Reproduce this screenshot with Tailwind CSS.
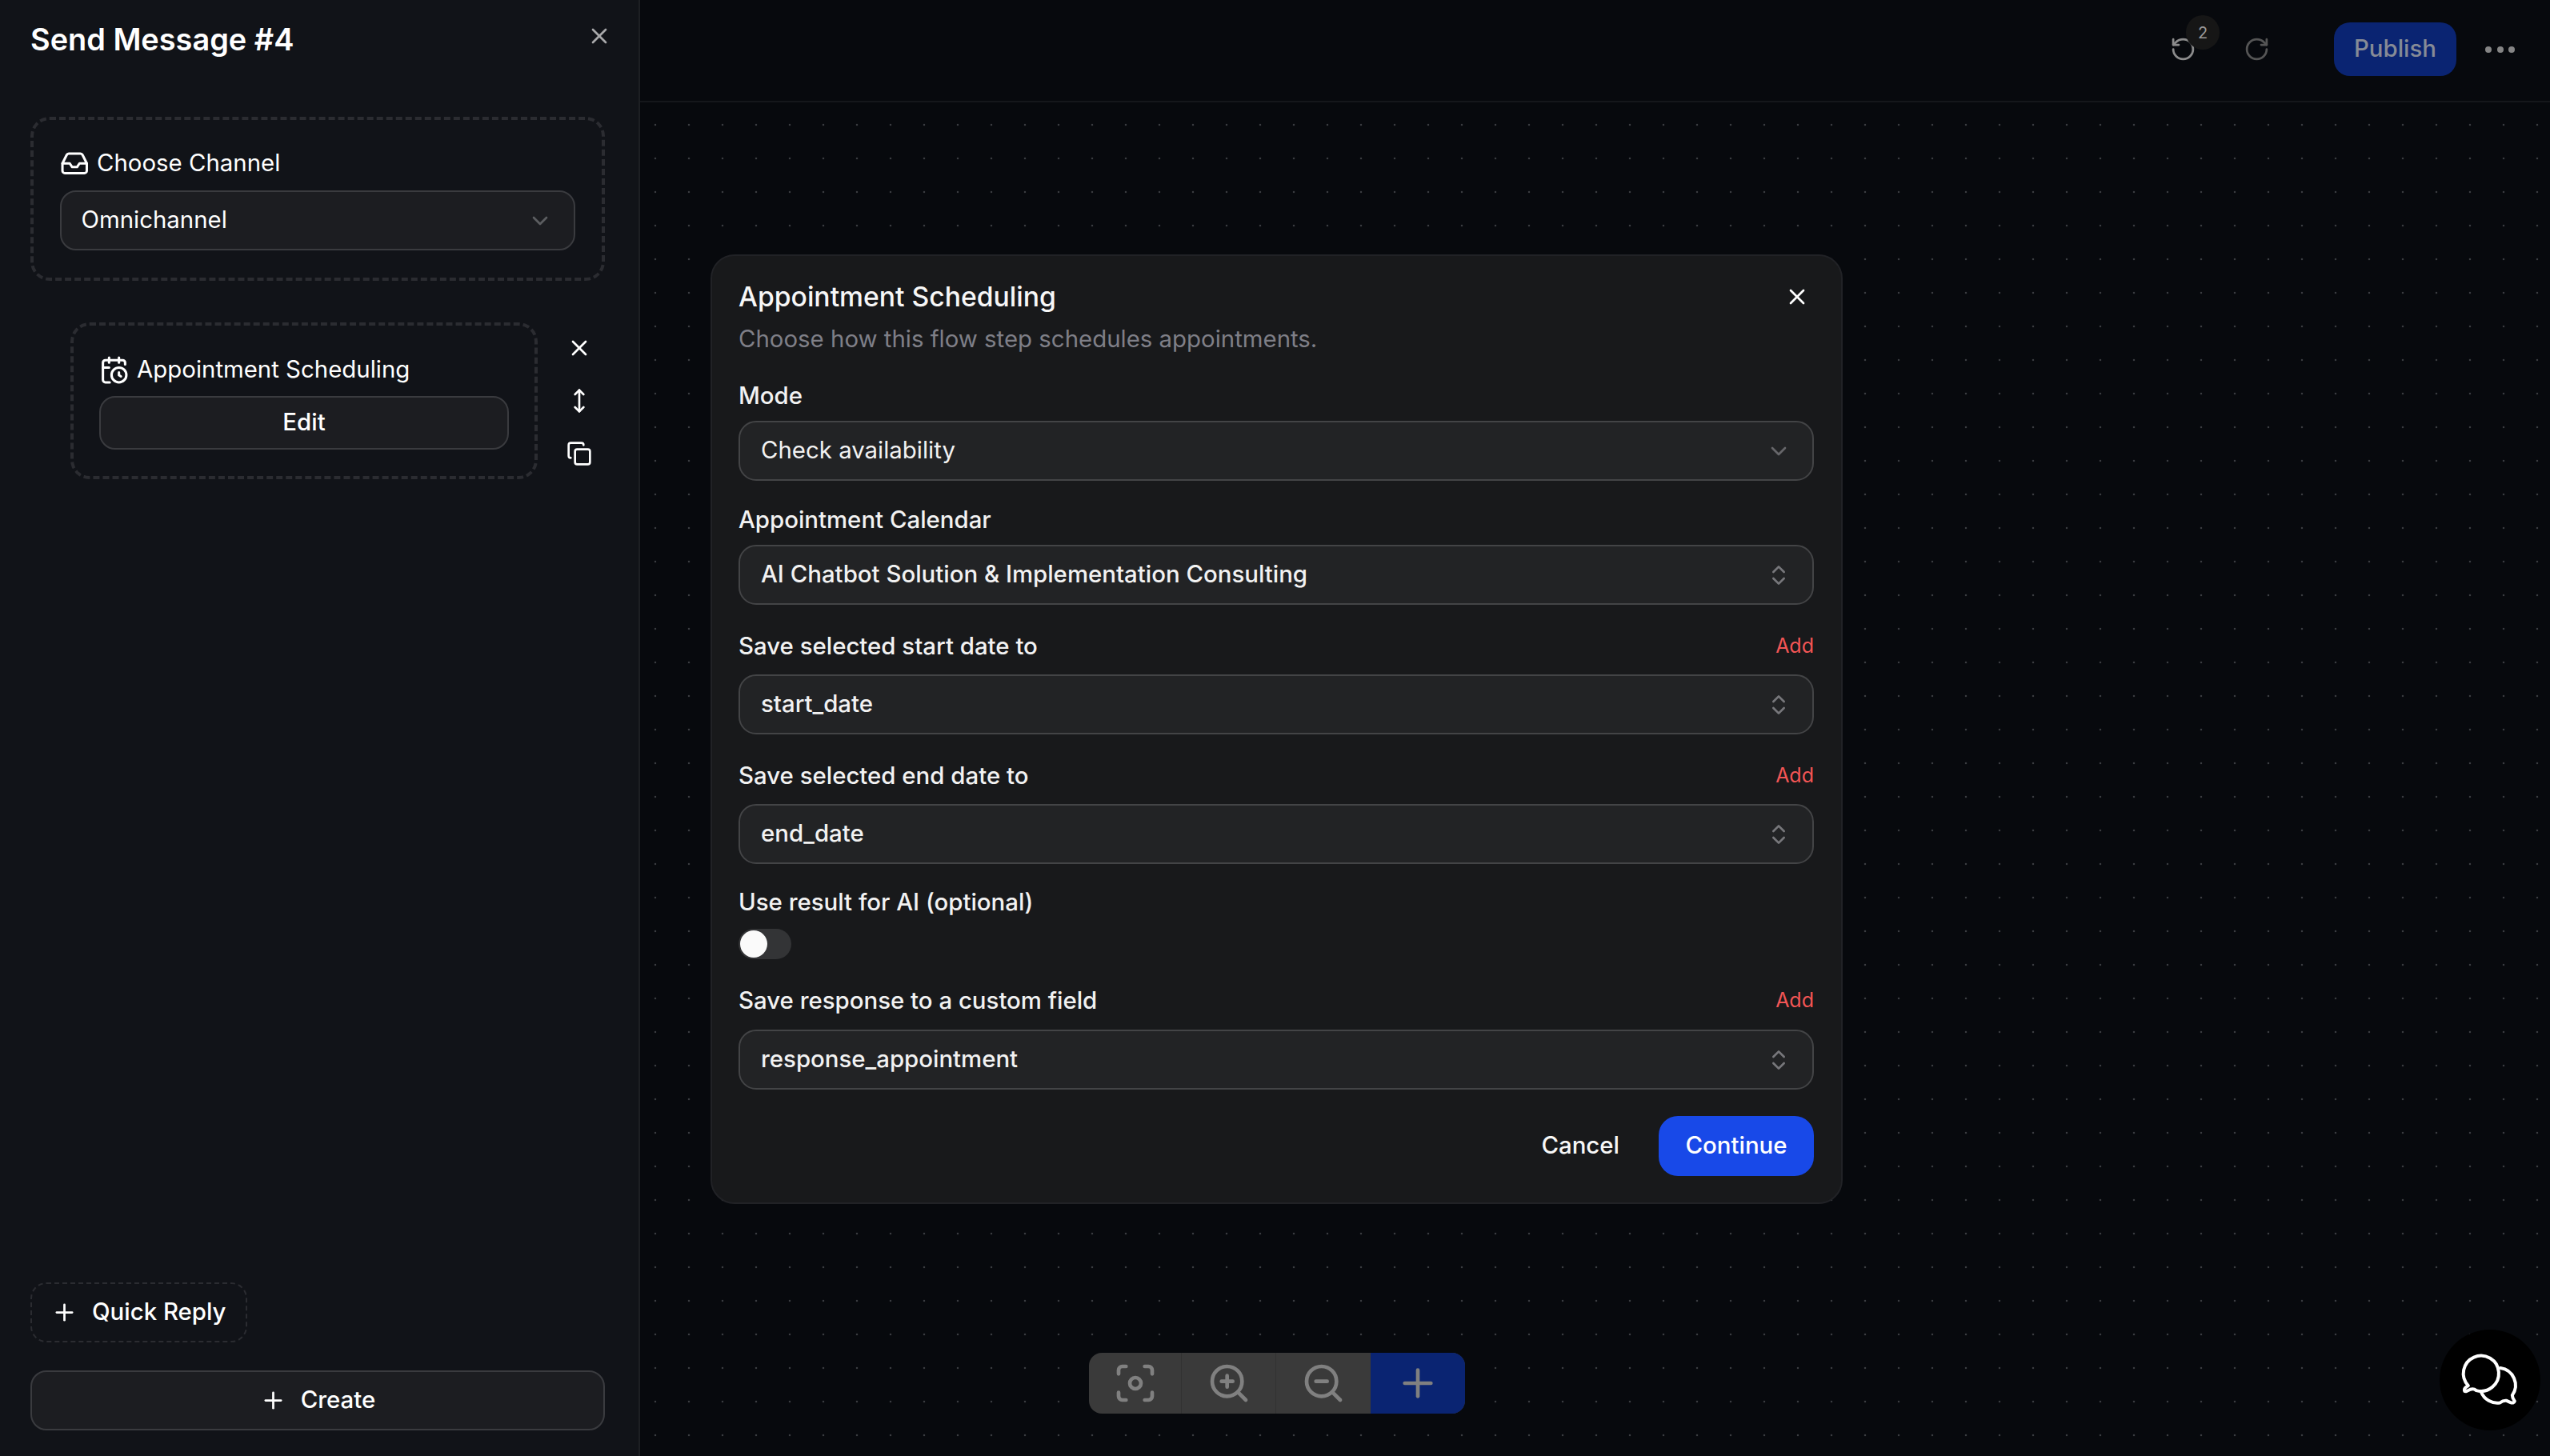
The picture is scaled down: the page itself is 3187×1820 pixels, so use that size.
<!DOCTYPE html>
<html lang="en">
<head>
  <meta charset="UTF-8">
  <title>Send Message #4</title>
  <script src="https://cdn.jsdelivr.net/npm/@tailwindcss/browser@4"></script>
</head>
<body class="bg-[#07090d] font-['Inter',sans-serif] text-white overflow-hidden">
  <div class="flex h-[1820px] w-[3187px]">

    <!-- Sidebar -->
    <aside class="w-[800px] shrink-0 h-full flex flex-col bg-[#111318] border-r-2 border-[#1d1f23] pl-[38px] pr-[42px] pb-[32px]">
      <div class="flex items-center justify-between h-[50px] mt-[24px]">
        <h2 class="text-[37.9px] font-semibold text-white">Send Message #4</h2>
        <svg class="w-[32px] h-[32px] -mr-[9px] mb-2 text-[#a8a8aa]" viewBox="0 0 24 24" fill="none" stroke="currentColor" stroke-width="2" stroke-linecap="round" stroke-linejoin="round"><path d="M18 6 6 18"/><path d="m6 6 12 12"/></svg>
      </div>

      <!-- Channel -->
      <div class="mt-[72px] border-4 border-dashed border-[#2b2c31] rounded-[24px] pl-[32.5px] pr-[33px] py-[34px]">
        <div class="flex items-center gap-[10px] h-[40px]">
          <svg class="w-[36.5px] h-[36.5px]" viewBox="0 0 24 24" fill="none" stroke="currentColor" stroke-width="2" stroke-linecap="round" stroke-linejoin="round"><polyline points="22 12 16 12 14 15 10 15 8 12 2 12"/><path d="M5.45 5.11 2 12v6a2 2 0 0 0 2 2h16a2 2 0 0 0 2-2v-6l-3.45-6.89A2 2 0 0 0 16.76 4H7.24a2 2 0 0 0-1.79 1.11z"/></svg>
          <span class="text-[29.4px]">Choose Channel</span>
        </div>
        <div class="mt-[14px] h-[75px] flex items-center justify-between pl-[25px] pr-[26px] bg-[#1c1d21] border-2 border-[#3a3b3f] rounded-[20px]">
          <span class="text-[29.4px]">Omnichannel</span>
          <svg class="w-[32px] h-[32px] text-[#5c5d61]" viewBox="0 0 24 24" fill="none" stroke="currentColor" stroke-width="2" stroke-linecap="round" stroke-linejoin="round"><path d="m6 9 6 6 6-6"/></svg>
        </div>
      </div>

      <!-- Step -->
      <div class="flex mt-[52px] ml-[49.5px]">
        <div class="w-[584.5px] border-4 border-dashed border-[#2b2c31] rounded-[24px] pl-[32.5px] pr-[32px] pt-[35px] pb-[33px]">
          <div class="flex items-center gap-[10px] h-[40px]">
            <svg class="w-[37px] h-[37px]" viewBox="0 0 24 24" fill="none" stroke="currentColor" stroke-width="2" stroke-linecap="round" stroke-linejoin="round"><path d="M16 14v2.2l1.6 1"/><path d="M16 2v4"/><path d="M21 7.5V6a2 2 0 0 0-2-2H5a2 2 0 0 0-2 2v14a2 2 0 0 0 2 2h3.5"/><path d="M3 10h5"/><path d="M8 2v4"/><circle cx="16" cy="16" r="6"/></svg>
            <span class="text-[29.4px]">Appointment Scheduling</span>
          </div>
          <div class="mt-[13px] h-[67px] flex items-center justify-center bg-[#1c1d21] border-2 border-[#3a3b3f] rounded-[20px] text-[29.4px] font-medium">Edit</div>
        </div>
        <div class="ml-[36px] pt-[16px] flex flex-col gap-[34px]">
          <svg class="w-[32px] h-[32px]" viewBox="0 0 24 24" fill="none" stroke="currentColor" stroke-width="2" stroke-linecap="round" stroke-linejoin="round"><path d="M18 6 6 18"/><path d="m6 6 12 12"/></svg>
          <svg class="w-[32px] h-[32px]" viewBox="0 0 24 24" fill="none" stroke="currentColor" stroke-width="2" stroke-linecap="round" stroke-linejoin="round"><path d="M12 2v20"/><path d="m8 18 4 4 4-4"/><path d="m8 6 4-4 4 4"/></svg>
          <svg class="w-[32px] h-[32px]" viewBox="0 0 24 24" fill="none" stroke="currentColor" stroke-width="2" stroke-linecap="round" stroke-linejoin="round"><rect width="14" height="14" x="8" y="8" rx="2" ry="2"/><path d="M4 16c-1.1 0-2-.9-2-2V4c0-1.1.9-2 2-2h10c1.1 0 2 .9 2 2"/></svg>
        </div>
      </div>

      <!-- Bottom buttons -->
      <div class="mt-auto w-[271px] h-[75px] flex items-center gap-[18px] pl-[24px] border-2 border-dashed border-[#2b2c31] rounded-[20px]">
        <svg class="w-[33px] h-[33px]" viewBox="0 0 24 24" fill="none" stroke="currentColor" stroke-width="2" stroke-linecap="round" stroke-linejoin="round"><path d="M5 12h14"/><path d="M12 5v14"/></svg>
        <span class="text-[29.4px] font-medium">Quick Reply</span>
      </div>
      <div class="mt-[35px] h-[75px] flex items-center justify-center gap-[18px] bg-[#1c1d21] border-2 border-[#3a3b3f] rounded-[20px]">
        <svg class="w-[33px] h-[33px]" viewBox="0 0 24 24" fill="none" stroke="currentColor" stroke-width="2" stroke-linecap="round" stroke-linejoin="round"><path d="M5 12h14"/><path d="M12 5v14"/></svg>
        <span class="text-[29.4px] font-medium">Create</span>
      </div>
    </aside>

    <!-- Canvas -->
    <main class="relative flex-1 h-full bg-[#07090d] bg-[radial-gradient(circle,#3a3c40_1.4px,transparent_1.6px)] bg-[size:42px_42px] bg-[position:-2px_9px]">
      <header class="h-[128px] bg-[#07090d] border-b-2 border-[#15171b] flex items-center justify-end pr-[44px] pb-[3px]">
        <div class="relative w-[33px] h-[33px] text-[#8c8c8c]">
          <svg class="w-[33px] h-[33px]" viewBox="0 0 24 24" fill="none" stroke="currentColor" stroke-width="2" stroke-linecap="round" stroke-linejoin="round"><path d="M3 12a9 9 0 1 0 9-9 9.75 9.75 0 0 0-6.74 2.74L3 8"/><path d="M3 3v5h5"/></svg>
          <span class="absolute left-[20px] -top-[26px] w-[42px] h-[43px] rounded-full bg-[#161616] flex items-center justify-center text-[20px] text-[#999999]">2</span>
        </div>
        <svg class="ml-[59px] w-[33px] h-[33px] text-[#555555]" viewBox="0 0 24 24" fill="none" stroke="currentColor" stroke-width="2" stroke-linecap="round" stroke-linejoin="round"><path d="M21 12a9 9 0 1 1-9-9c2.52 0 4.93 1 6.74 2.74L21 8"/><path d="M21 3v5h-5"/></svg>
        <div class="ml-[80px] w-[153px] h-[67px] rounded-[20px] bg-[#0a2472] flex items-center justify-center text-[29.4px] font-medium text-[#868b96]">Publish</div>
        <div class="ml-[36px] flex gap-[6.5px]">
          <span class="w-2 h-2 rounded-full bg-[#858585]"></span>
          <span class="w-2 h-2 rounded-full bg-[#858585]"></span>
          <span class="w-2 h-2 rounded-full bg-[#858585]"></span>
        </div>
      </header>

      <!-- Zoom toolbar -->
      <div class="absolute left-[561px] top-[1691px] flex h-[76px] rounded-[16px] overflow-hidden bg-[#3a3a3a] text-[#808080]">
        <div class="w-[116px] flex items-center justify-center border-r border-[#323232]">
          <svg class="w-[56px] h-[56px]" viewBox="0 0 24 24" fill="none" stroke="currentColor" stroke-width="2" stroke-linecap="round" stroke-linejoin="round"><circle cx="12" cy="12" r="3"/><path d="M3 7V5a2 2 0 0 1 2-2h2"/><path d="M17 3h2a2 2 0 0 1 2 2v2"/><path d="M21 17v2a2 2 0 0 1-2 2h-2"/><path d="M7 21H5a2 2 0 0 1-2-2v-2"/></svg>
        </div>
        <div class="w-[118px] flex items-center justify-center border-r border-[#323232]">
          <svg class="w-[56px] h-[56px]" viewBox="0 0 24 24" fill="none" stroke="currentColor" stroke-width="2" stroke-linecap="round" stroke-linejoin="round"><circle cx="11" cy="11" r="8"/><line x1="21" x2="16.65" y1="21" y2="16.65"/><line x1="11" x2="11" y1="8" y2="14"/><line x1="8" x2="14" y1="11" y2="11"/></svg>
        </div>
        <div class="w-[118px] flex items-center justify-center">
          <svg class="w-[56px] h-[56px]" viewBox="0 0 24 24" fill="none" stroke="currentColor" stroke-width="2" stroke-linecap="round" stroke-linejoin="round"><circle cx="11" cy="11" r="8"/><line x1="21" x2="16.65" y1="21" y2="16.65"/><line x1="8" x2="14" y1="11" y2="11"/></svg>
        </div>
        <div class="w-[118px] flex items-center justify-center bg-[#0a2472]">
          <svg class="w-[56px] h-[56px]" viewBox="0 0 24 24" fill="none" stroke="currentColor" stroke-width="2" stroke-linecap="round" stroke-linejoin="round"><path d="M5 12h14"/><path d="M12 5v14"/></svg>
        </div>
      </div>

      <!-- Chat button -->
      <div class="absolute left-[2249px] top-[1662px] w-[126px] h-[126px] rounded-full bg-black">
        <svg class="w-[126px] h-[126px]" viewBox="187 127 376 376" fill="none" stroke="white" stroke-width="12" stroke-linecap="round" stroke-linejoin="round">
          <path d="M294 336A66 66 0 1 1 324 354Q314 346 302 350L288 357Q276 360 280 348Q284 342 294 336Z"/>
          <path d="M414 270A65 65 0 0 1 458 372Q458 382 467 394Q464 404 450 398L437 392Q425 390 412 400A65 65 0 0 1 342 360"/>
        </svg>
      </div>

      <!-- Dialog -->
      <div class="absolute left-[88px] top-[318px] w-[1415px] h-[1187px] bg-[#18191b] border-2 border-[#212226] rounded-[30px] pl-[33px] pr-[34px] pt-[26px]">
        <div class="flex items-center justify-between h-[50px]">
          <h2 class="text-[33.7px] font-medium text-[#f7f7f7]">Appointment Scheduling</h2>
          <svg class="w-[32px] h-[32px] mr-[5px]" viewBox="0 0 24 24" fill="none" stroke="currentColor" stroke-width="2" stroke-linecap="round" stroke-linejoin="round"><path d="M18 6 6 18"/><path d="m6 6 12 12"/></svg>
        </div>
        <p class="mt-2 h-[40px] flex items-center text-[29.4px] text-[#7f7f87]">Choose how this flow step schedules appointments.</p>

        <div class="mt-[31px] h-[40px] flex items-center text-[29.4px] font-medium text-[#f2f2f2]">Mode</div>
        <div class="mt-[11px] h-[75px] flex items-center justify-between px-[26px] bg-[#222325] border-2 border-[#434446] rounded-[22px]">
          <span class="text-[29.4px] text-[#f2f2f2]">Check availability</span>
          <svg class="w-[32px] h-[32px] text-[#66666a]" viewBox="0 0 24 24" fill="none" stroke="currentColor" stroke-width="2" stroke-linecap="round" stroke-linejoin="round"><path d="m6 9 6 6 6-6"/></svg>
        </div>

        <div class="mt-[29px] h-[40px] flex items-center text-[29.4px] font-medium text-[#f2f2f2]">Appointment Calendar</div>
        <div class="mt-[11px] h-[75px] flex items-center justify-between px-[26px] bg-[#222325] border-2 border-[#434446] rounded-[22px]">
          <span class="text-[29.4px] font-medium text-[#f2f2f2]">AI Chatbot Solution &amp; Implementation Consulting</span>
          <svg class="w-[32px] h-[32px] text-[#77777b]" viewBox="0 0 24 24" fill="none" stroke="currentColor" stroke-width="2" stroke-linecap="round" stroke-linejoin="round"><path d="m7 15 5 5 5-5"/><path d="m7 9 5-5 5 5"/></svg>
        </div>

        <div class="mt-[32px] h-[40px] flex items-center justify-between">
          <span class="text-[29.4px] font-medium text-[#f2f2f2]">Save selected start date to</span>
          <span class="text-[25px] text-[#f25555]">Add</span>
        </div>
        <div class="mt-[15px] h-[75px] flex items-center justify-between px-[26px] bg-[#222325] border-2 border-[#434446] rounded-[22px]">
          <span class="text-[29.4px] font-medium text-[#f2f2f2]">start_date</span>
          <svg class="w-[32px] h-[32px] text-[#77777b]" viewBox="0 0 24 24" fill="none" stroke="currentColor" stroke-width="2" stroke-linecap="round" stroke-linejoin="round"><path d="m7 15 5 5 5-5"/><path d="m7 9 5-5 5 5"/></svg>
        </div>

        <div class="mt-[32px] h-[40px] flex items-center justify-between">
          <span class="text-[29.4px] font-medium text-[#f2f2f2]">Save selected end date to</span>
          <span class="text-[25px] text-[#f25555]">Add</span>
        </div>
        <div class="mt-[15px] h-[75px] flex items-center justify-between px-[26px] bg-[#222325] border-2 border-[#434446] rounded-[22px]">
          <span class="text-[29.4px] font-medium text-[#f2f2f2]">end_date</span>
          <svg class="w-[32px] h-[32px] text-[#77777b]" viewBox="0 0 24 24" fill="none" stroke="currentColor" stroke-width="2" stroke-linecap="round" stroke-linejoin="round"><path d="m7 15 5 5 5-5"/><path d="m7 9 5-5 5 5"/></svg>
        </div>

        <div class="mt-[28px] h-[40px] flex items-center text-[29.4px] font-medium text-[#f2f2f2]">Use result for AI (optional)</div>
        <div class="mt-[13px] w-[66px] h-[38px] rounded-full bg-[#333436] flex items-center pl-[2px]">
          <span class="w-[34px] h-[34px] rounded-full bg-[#fafafa]"></span>
        </div>

        <div class="mt-[32px] h-[40px] flex items-center justify-between">
          <span class="text-[29.4px] font-medium text-[#f2f2f2]">Save response to a custom field</span>
          <span class="text-[25px] text-[#f25555]">Add</span>
        </div>
        <div class="mt-[16px] h-[75px] flex items-center justify-between px-[26px] bg-[#222325] border-2 border-[#434446] rounded-[22px]">
          <span class="text-[29.4px] font-medium text-[#f2f2f2]">response_appointment</span>
          <svg class="w-[32px] h-[32px] text-[#77777b]" viewBox="0 0 24 24" fill="none" stroke="currentColor" stroke-width="2" stroke-linecap="round" stroke-linejoin="round"><path d="m7 15 5 5 5-5"/><path d="m7 9 5-5 5 5"/></svg>
        </div>

        <div class="mt-[33px] flex items-center justify-end">
          <span class="text-[29.4px] font-medium text-[#f7f7f7] mr-[49px]">Cancel</span>
          <div class="w-[194px] h-[75px] rounded-[24px] bg-[#1849e8] flex items-center justify-center text-[29.4px] font-medium">Continue</div>
        </div>
      </div>
    </main>
  </div>
</body>
</html>
